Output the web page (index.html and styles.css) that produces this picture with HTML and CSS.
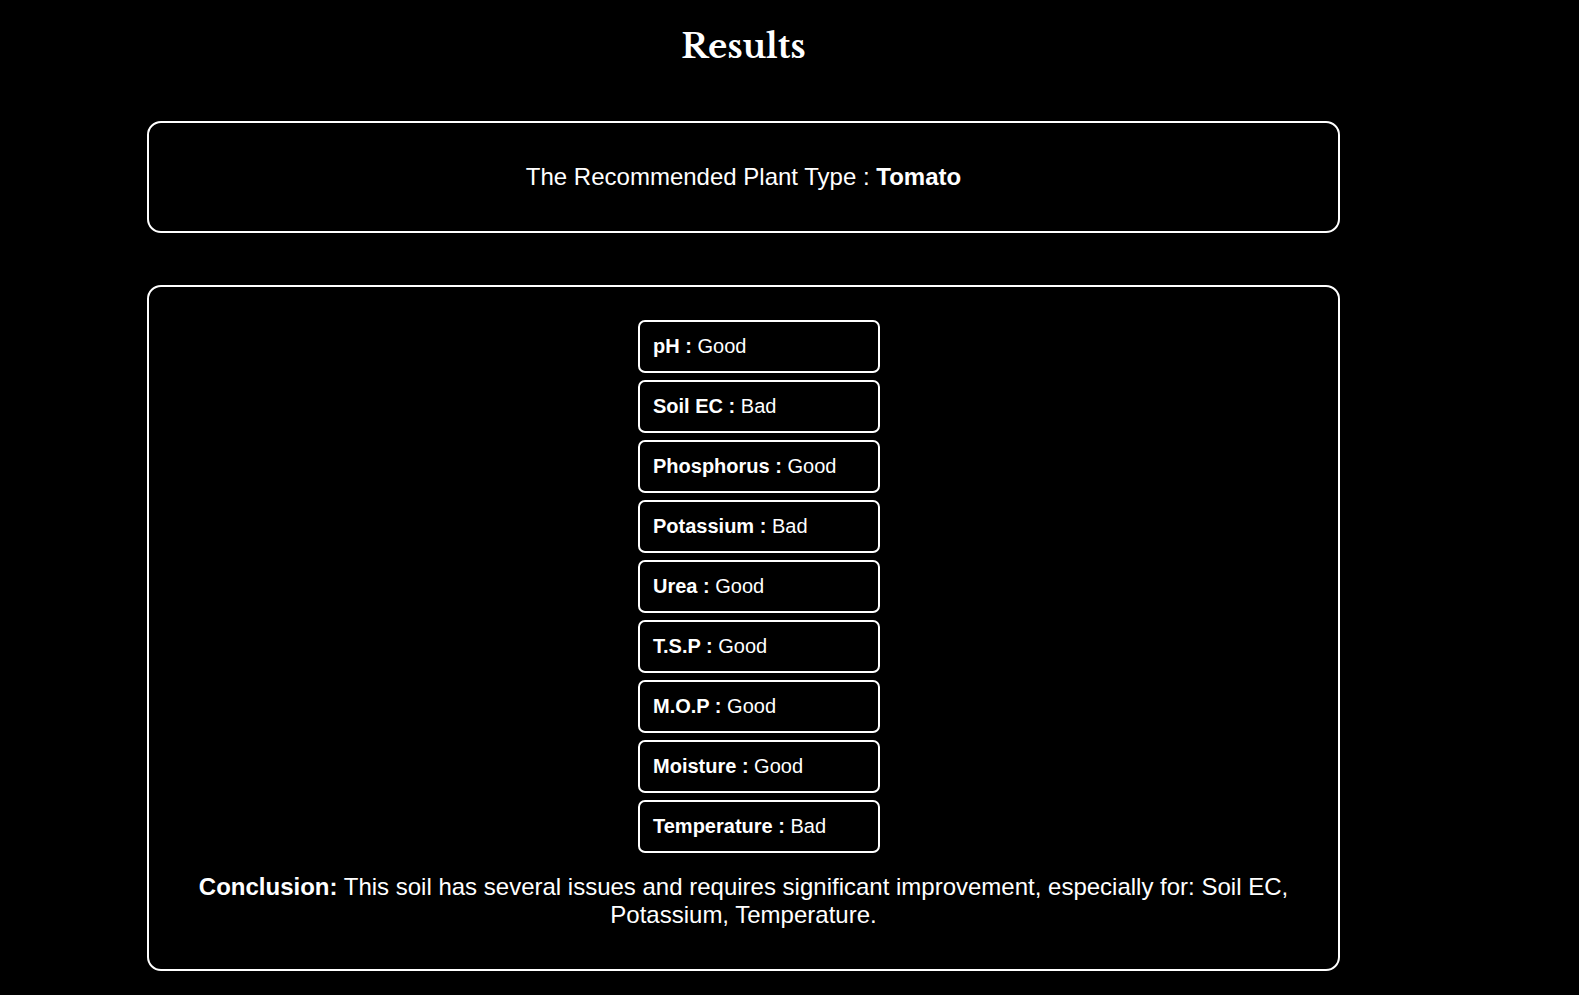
FILE: index.html
```html
<!DOCTYPE html>
<html lang="en">
<head>
<meta charset="utf-8">
<meta name="viewport" content="width=device-width, initial-scale=1">
<title>Results</title>
<link rel="stylesheet" href="styles.css">
</head>
<body>
<main class="results">
  <h1 class="results-title">Results</h1>
  <section class="panel plant">
    <p class="text">The Recommended Plant Type : <strong>Tomato</strong></p>
  </section>
  <section class="panel report">
    <ul class="readings">
      <li class="reading"><strong>pH :</strong> Good</li>
      <li class="reading"><strong>Soil EC :</strong> Bad</li>
      <li class="reading"><strong>Phosphorus :</strong> Good</li>
      <li class="reading"><strong>Potassium :</strong> Bad</li>
      <li class="reading"><strong>Urea :</strong> Good</li>
      <li class="reading"><strong>T.S.P :</strong> Good</li>
      <li class="reading"><strong>M.O.P :</strong> Good</li>
      <li class="reading"><strong>Moisture :</strong> Good</li>
      <li class="reading"><strong>Temperature :</strong> Bad</li>
    </ul>
    <p class="text"><strong>Conclusion:</strong> This soil has several issues and requires significant improvement, especially for: Soil EC, Potassium, Temperature.</p>
  </section>
</main>
</body>
</html>
```
FILE: styles.css
```css
* {
  box-sizing: border-box;
}

body {
  margin: 0;
  background: #000;
  color: #fff;
  font-family: Arial, "Liberation Sans", sans-serif;
}

.results {
  display: flex;
  flex-direction: column;
  padding: 24px 239px 24px 147px;
}

.results-title {
  margin: 0 0 52px;
  font-family: Baskerville, "Libre Baskerville", "Liberation Serif", serif;
  font-size: 33px;
  line-height: 45px;
  text-align: center;
}

.panel {
  padding: 40px;
  border: 2px solid #fff;
  border-radius: 14px;
  text-align: center;
}

.plant {
  margin-bottom: 52px;
}

.report {
  display: flex;
  flex-direction: column;
  gap: 20px;
  padding-top: 33px;
}

.text {
  margin: 0;
  font-size: 24px;
  line-height: 28px;
}

.readings {
  display: grid;
  gap: 7px;
  width: 273px;
  margin: 0 auto;
  padding: 0 0 0 31px;
  list-style: none;
}

.reading {
  padding: 13px;
  border: 2px solid #fff;
  border-radius: 7px;
  font-size: 20px;
  line-height: 23px;
  text-align: left;
}
```
